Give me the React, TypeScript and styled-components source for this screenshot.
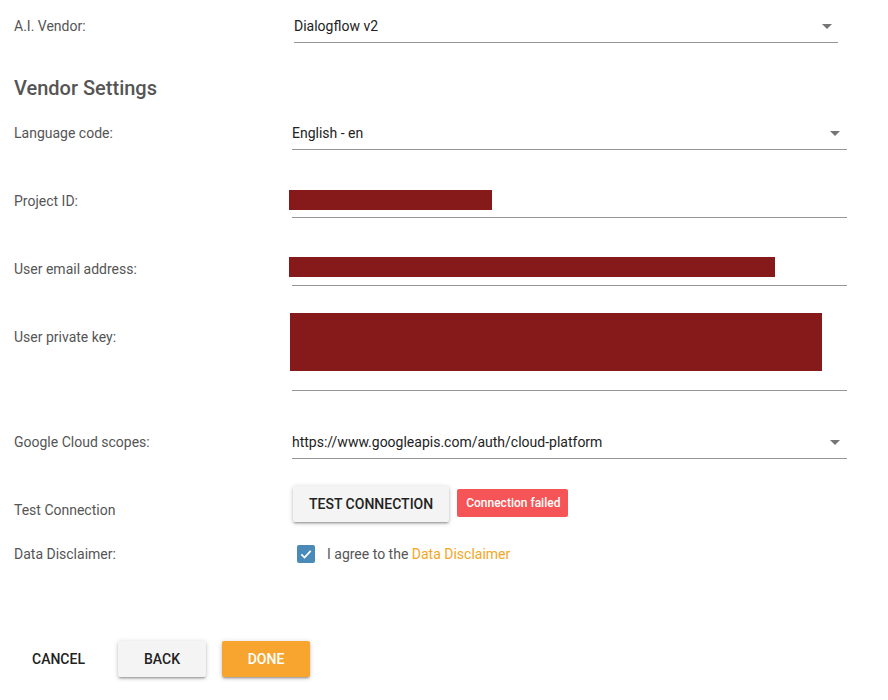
import React from "react";
import styled, { createGlobalStyle } from "styled-components";

const Global = createGlobalStyle`
  html, body { margin: 0; padding: 0; background: #fff; }
  body { font-family: Roboto, "Noto Sans", Arial, sans-serif; -webkit-font-smoothing: antialiased; }
  * { box-sizing: border-box; }
`;

const Page = styled.div`
  width: 888px;
  height: 700px;
  padding: 10px 0 0 14px;
  display: flex;
  flex-direction: column;
`;

const Row = styled.div<{ $mt?: number }>`
  display: flex;
  align-items: flex-start;
  margin-top: ${(p) => p.$mt ?? 0}px;
`;

const Label = styled.div<{ $pt?: number }>`
  width: 278px;
  flex: none;
  padding-top: ${(p) => p.$pt ?? 6}px;
  font-size: 14px;
  line-height: 20px;
  color: #555;
`;

const Field = styled.div<{ $w?: number; $ml?: number; $pt?: number; $pb?: number; $pr?: number }>`
  width: ${(p) => p.$w ?? 555}px;
  margin-left: ${(p) => p.$ml ?? 0}px;
  padding: ${(p) => p.$pt ?? 6}px ${(p) => p.$pr ?? 6}px ${(p) => p.$pb ?? 6}px 0;
  border-bottom: 1px solid #969696;
  display: flex;
  align-items: center;
  justify-content: space-between;
  font-size: 14px;
  line-height: 20px;
  color: #222;
`;

const Redacted = styled.div<{ $w: number; $h: number; $ml?: number }>`
  width: ${(p) => p.$w}px;
  height: ${(p) => p.$h}px;
  margin-left: ${(p) => p.$ml ?? -3}px;
  background: #86191a;
`;

const Arrow = () => (
  <svg width="10" height="5" viewBox="0 0 10 5">
    <path d="M0 0 L10 0 L5 5 Z" fill="#757575" />
  </svg>
);

const Heading = styled.h2`
  margin: 33px 0 0 0;
  font-size: 20px;
  line-height: 24px;
  font-weight: 500;
  color: #555;
`;

const RaisedButton = styled.button<{ $primary?: boolean; $w?: number }>`
  height: 36px;
  width: ${(p) => (p.$w ? `${p.$w}px` : "auto")};
  padding: 0 16px;
  border: none;
  border-radius: 2px;
  background: ${(p) => (p.$primary ? "#f7a52f" : "#f4f4f4")};
  color: ${(p) => (p.$primary ? "#fff" : "#222")};
  font-family: Roboto, Arial, sans-serif;
  font-size: 14px;
  font-weight: 500;
  letter-spacing: 0;
  text-transform: uppercase;
  box-shadow: 0 1px 5px rgba(0, 0, 0, 0.2), 0 2px 2px rgba(0, 0, 0, 0.14), 0 3px 1px -2px rgba(0, 0, 0, 0.12);
`;

const FlatButton = styled.button`
  height: 36px;
  width: 86px;
  padding: 0 16px;
  border: none;
  background: transparent;
  color: #222;
  font-family: Roboto, Arial, sans-serif;
  font-size: 14px;
  font-weight: 500;
  letter-spacing: 0;
  text-align: left;
`;

const TestGroup = styled.div`
  display: flex;
  align-items: flex-start;
  margin-left: 1px;
`;

const Badge = styled.span`
  margin: 3px 0 0 8px;
  height: 28px;
  padding: 0 8px 0 9px;
  display: inline-flex;
  align-items: center;
  background: #f55556;
  color: #fff;
  border-radius: 2px;
  font-size: 12px;
  font-weight: 500;
`;

const CheckLine = styled.label`
  display: flex;
  align-items: center;
  gap: 12px;
  margin-left: 5px;
  padding-top: 1px;
  font-size: 14px;
  line-height: 20px;
  color: #555;
`;

const Box = styled.span`
  width: 18px;
  height: 18px;
  border-radius: 2px;
  background: #4a8ab9;
  display: inline-flex;
  align-items: center;
  justify-content: center;
`;

const Link = styled.a`
  color: #f5a623;
  text-decoration: none;
`;

const Footer = styled.div`
  display: flex;
  gap: 16px;
  margin: 77px 0 0 -14px;
  padding-left: 16px;
`;

export default function App() {
  return (
    <>
      <Global />
      <Page>
        <Row>
          <Label>A.I. Vendor:</Label>
          <Field $w={544} $ml={2}>
            <span>Dialogflow v2</span>
            <Arrow />
          </Field>
        </Row>

        <Heading>Vendor Settings</Heading>

        <Row $mt={17}>
          <Label>Language code:</Label>
          <Field $pr={7}>
            <span>English - en</span>
            <Arrow />
          </Field>
        </Row>

        <Row $mt={34}>
          <Label $pt={7}>Project ID:</Label>
          <Field $pb={7}>
            <Redacted $w={203} $h={20} />
          </Field>
        </Row>

        <Row $mt={34}>
          <Label $pt={7}>User email address:</Label>
          <Field $pt={5} $pb={8}>
            <Redacted $w={486} $h={20} />
          </Field>
        </Row>

        <Row $mt={21}>
          <Label $pt={20}>User private key:</Label>
          <Field $pb={19}>
            <Redacted $w={532} $h={58} $ml={-2} />
          </Field>
        </Row>

        <Row $mt={35}>
          <Label>Google Cloud scopes:</Label>
          <Field $pr={7}>
            <span>https://www.googleapis.com/auth/cloud-platform</span>
            <Arrow />
          </Field>
        </Row>

        <Row $mt={27}>
          <Label $pt={14}>Test Connection</Label>
          <TestGroup>
            <RaisedButton>Test Connection</RaisedButton>
            <Badge>Connection failed</Badge>
          </TestGroup>
        </Row>

        <Row $mt={21}>
          <Label $pt={1}>Data Disclaimer:</Label>
          <CheckLine>
            <Box>
              <svg width="14" height="14" viewBox="0 0 24 24">
                <path d="M4 12.5 L9.5 18 L20 6.5" stroke="#fff" strokeWidth="3" fill="none" />
              </svg>
            </Box>
            <span>
              I agree to the <Link>Data Disclaimer</Link>
            </span>
          </CheckLine>
        </Row>

        <Footer>
          <FlatButton>CANCEL</FlatButton>
          <RaisedButton $w={88}>Back</RaisedButton>
          <RaisedButton $w={88} $primary>
            Done
          </RaisedButton>
        </Footer>
      </Page>
    </>
  );
}
